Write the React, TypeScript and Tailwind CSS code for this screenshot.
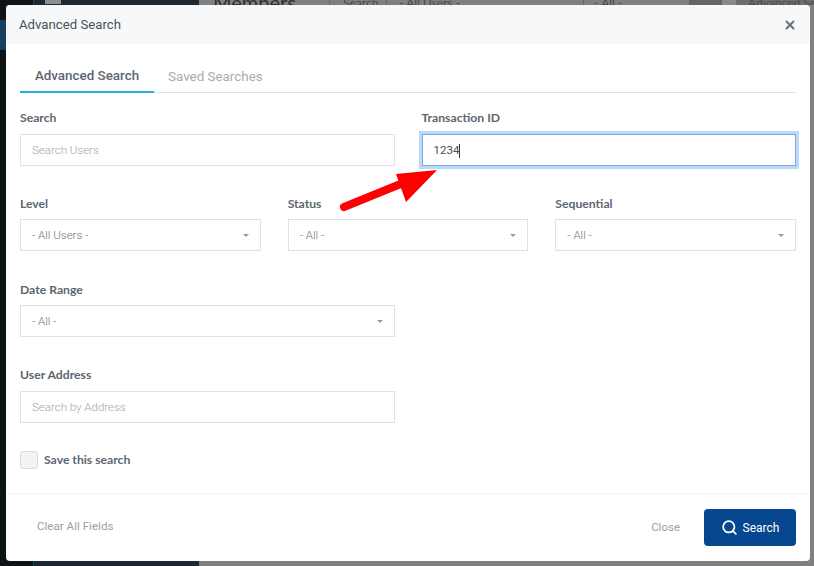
import { Search, X } from 'lucide-react';

const labelClass = "block text-[12.2px] leading-[16px] font-bold text-[#5c6670] font-['Lato',sans-serif]";
const boxClass = "flex items-center h-[32px] border border-[#d8e3f0] bg-white px-[11px] pt-[1px] text-[11.5px] font-['Roboto',sans-serif] font-light text-[#70767c]";

function SelectField({ label, value }: { label: string; value: string }) {
  return (
    <div>
      <label className={labelClass}>{label}</label>
      <div className={`${boxClass} justify-between mt-[7px]`}>
        <span>{value}</span>
        <span className="w-0 h-0 border-x-[3.5px] border-x-transparent border-t-[3.5px] border-t-[#9a9a9a]" />
      </div>
    </div>
  );
}

function TextField({ label, placeholder }: { label: string; placeholder: string }) {
  return (
    <div>
      <label className={labelClass}>{label}</label>
      <div className={`${boxClass} mt-[8px] text-[#a0a5aa]`}>{placeholder}</div>
    </div>
  );
}

export default function App() {
  return (
    <div className="relative w-[814px] h-[566px] overflow-hidden flex bg-[#808080]">
      {/* dimmed page behind the modal */}
      <div className="w-[33px] bg-[#0e1316]" />
      <div className="w-[166px] bg-[#1f2730] border-l border-[#0f4a5c]">
        <div className="ml-[11px] w-[16px] h-[4px] bg-[#8a8f94]" />
      </div>
      <div className="flex-1 min-w-0 overflow-hidden text-[#333] font-['Lato',sans-serif]">
        <div className="flex items-end h-[5px] text-[#4a4a4a]">
          <span className="w-[130px] shrink-0 pl-[14px] text-[20px] leading-[5px] text-[#2e2e2e]">Members</span>
          <span className="w-[58px] shrink-0 pl-[13px] h-[5px] border-x border-[#6a6a6a] text-[12px] leading-[5px]">Search</span>
          <span className="w-[196px] shrink-0 pl-[12px] text-[12px] leading-[5px]">- All Users -</span>
          <span className="w-[106px] shrink-0 pl-[10px] border-l border-[#6a6a6a] h-[5px] text-[12px] leading-[5px]">- All -</span>
          <span className="w-[33px] shrink-0 h-[5px] bg-[#666]" />
          <span className="w-[14px] shrink-0 h-[5px] bg-[#8a8a8a]" />
          <span className="flex-1 min-w-0 overflow-hidden h-[5px] bg-[#6e6e6e] pl-[12px] text-[12px] leading-[5px] whitespace-nowrap">Advanced Search</span>
        </div>
      </div>
      <div className="absolute left-0 top-[20px] w-[6px] h-[30px] bg-[#15405f]" />

      <div className="absolute left-[6px] top-[5px] w-[804px] h-[556px] bg-white rounded-[4px] overflow-hidden flex flex-col">
        <div className="h-[39px] bg-[#f6f8fa] flex items-center justify-between pl-[13px] pr-[13px] shrink-0">
          <span className="text-[13.2px] text-[#495057] font-['Roboto',sans-serif]">Advanced Search</span>
          <X size={14} strokeWidth={3.5} className="text-[#6c757d]" />
        </div>

        <div className="flex-1 px-[14px]">
          <div className="flex border-b border-[#d8e3f0] mt-[16px] h-[33px]">
            <div className="w-[134px] h-[33px] pt-[2px] border-b-[2px] border-[#29aee0] flex items-center justify-center text-[13.4px] font-medium text-[#5c6670] font-['Roboto',sans-serif]">
              Advanced Search
            </div>
            <div className="flex items-center pl-[14px] pt-[2px] text-[13.4px] text-[#a6abb0] font-['Roboto',sans-serif]">
              Saved Searches
            </div>
          </div>

          <div className="grid grid-cols-2 gap-x-[27px] w-[776px] mt-[17px]">
            <TextField label="Search" placeholder="Search Users" />
            <div>
              <label className={labelClass}>Transaction ID</label>
              <div className="flex items-center h-[32px] mt-[8px] pt-[1px] border border-[#80a8dc] ring-[3px] ring-[#b9d9f8] bg-white px-[11px] text-[11.5px] text-[#495057] font-['Roboto',sans-serif]">
                1234<span className="w-px h-[14px] bg-[#333]" />
              </div>
            </div>
          </div>

          <div className="grid grid-cols-3 gap-x-[27px] w-[776px] mt-[30px]">
            <SelectField label="Level" value="- All Users -" />
            <SelectField label="Status" value="- All -" />
            <SelectField label="Sequential" value="- All -" />
          </div>

          <div className="w-[375px] mt-[31px]">
            <SelectField label="Date Range" value="- All -" />
          </div>

          <div className="w-[375px] mt-[30px]">
            <TextField label="User Address" placeholder="Search by Address" />
          </div>

          <div className="flex items-center gap-[6px] mt-[27px]">
            <span className="w-[18px] h-[18px] rounded-[3px] border border-[#dcdcdc] bg-[#f3f3f3]" />
            <span className="pt-[1px] text-[12.2px] font-bold text-[#5c6670] font-['Lato',sans-serif]">Save this search</span>
          </div>
        </div>

        <div className="h-[68px] border-t border-[#f4f4f4] flex items-center justify-between pl-[31px] pr-[14px] shrink-0">
          <span className="text-[11.6px] -mt-[1px] text-[#a0a0a0] font-['Roboto',sans-serif]">Clear All Fields</span>
          <div className="flex items-center gap-[24px]">
            <span className="text-[11.5px] text-[#a0a0a0] font-['Roboto',sans-serif]">Close</span>
            <div className="w-[92px] h-[37px] rounded-[4px] bg-[#07478f] flex items-center justify-center gap-[5px] text-white text-[12px] font-['Roboto',sans-serif]">
              <Search size={17} strokeWidth={2.5} />
              Search
            </div>
          </div>
        </div>
      </div>

      {/* annotation arrow */}
      <svg className="absolute left-[335px] top-[165px]" width="110" height="50" viewBox="0 0 110 50">
        <path d="M9 42 L68 18" stroke="#ff0000" strokeWidth="8" strokeLinecap="round" fill="none" />
        <polygon points="102,5 61,9 71,37" fill="#ff0000" />
      </svg>
    </div>
  );
}
